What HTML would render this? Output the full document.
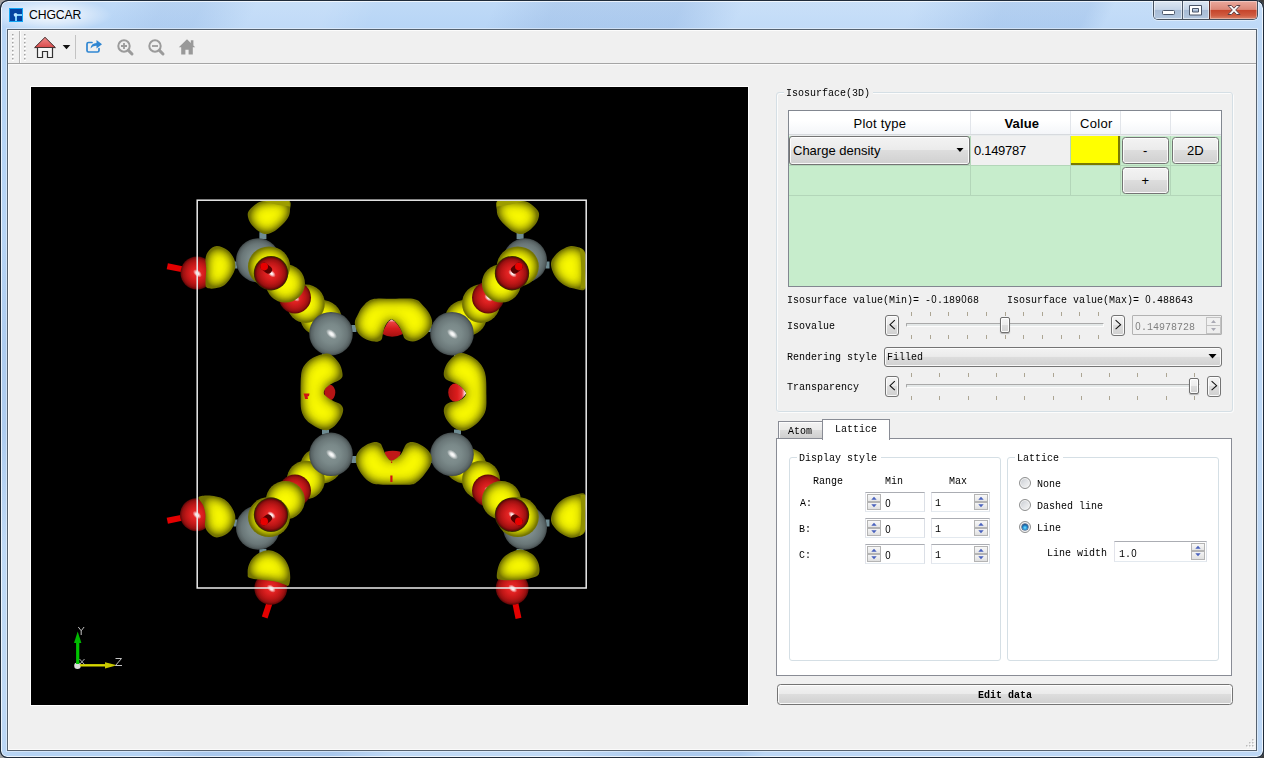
<!DOCTYPE html>
<html><head><meta charset="utf-8"><title>CHGCAR</title>
<style>
*{box-sizing:border-box;margin:0;padding:0}
html,body{width:1264px;height:758px;overflow:hidden;background:linear-gradient(90deg,#a0a0a0 0,#a0a0a0 50%,#3c3c3c 50%,#3c3c3c 100%);font-family:"Liberation Sans",sans-serif}
.abs,.abs>*{position:absolute}
#win{position:absolute;left:0;top:0;width:1264px;height:758px;border-radius:8px 8px 7px 7px;
 background:
  radial-gradient(ellipse 62px 17px at 50px 15px,rgba(255,255,255,.9),rgba(255,255,255,.45) 55%,rgba(255,255,255,0) 100%),
  linear-gradient(115deg,rgba(255,255,255,0) 0,rgba(255,255,255,0) 105px,rgba(20,60,140,.05) 150px,rgba(20,60,140,.05) 185px,rgba(255,255,255,.13) 235px,rgba(255,255,255,.13) 300px,rgba(255,255,255,0) 345px,rgba(255,255,255,0) 450px,rgba(20,60,140,.075) 505px,rgba(20,60,140,.075) 620px,rgba(255,255,255,.15) 676px,rgba(255,255,255,.15) 830px,rgba(20,60,140,.06) 912px,rgba(20,60,140,.06) 990px,rgba(255,255,255,.1) 1012px,rgba(255,255,255,.1) 100%),
  linear-gradient(#c0daf7 0,#b7d5f6 28px,#b5d3f4 100%);
 box-shadow:inset 0 0 0 1px #1f2b3a,inset 0 0 0 2px rgba(255,255,255,.72)}
#client{position:absolute;left:7px;top:29px;width:1250px;height:722px;border:1px solid #56626f;background:#f0f0f0;box-shadow:inset 1px 0 0 #fbfbfb,inset 0 -1px 0 #fbfbfb,0 0 0 1px rgba(255,255,255,.42)}
#title{position:absolute;left:29px;top:8px;font-size:12.2px;letter-spacing:-.1px;line-height:15px;color:#000;white-space:nowrap}
/* SimSun-like monospaced text: 6px advance, 8px cap height */
.ss{position:absolute;font:11.6px/14px "Liberation Mono",monospace;color:#000;white-space:nowrap;transform:scaleX(.862);transform-origin:0 0;letter-spacing:0}
.z{font-family:"Liberation Sans",sans-serif;display:inline-block;width:6.96px;text-align:center;font-size:11.2px;line-height:14px}
.sg{position:absolute;font:12.5px/15px "Liberation Sans",sans-serif;color:#000;white-space:nowrap}
.btn{position:absolute;border:1px solid #747474;border-radius:3.5px;background:linear-gradient(#f3f3f3 0,#ebebeb 47%,#dddddd 50%,#d0d0d0 100%);box-shadow:inset 0 0 0 1px rgba(255,255,255,.85)}
.gb{position:absolute;border:1px solid #d5dfe5;border-radius:3px}
.gbt{position:absolute;background:#f0f0f0;height:12px}
.tick{position:absolute;width:1px;height:4px;background:#aca593}
.groove{position:absolute;height:4px;border:1px solid #a9a9a9;border-bottom-color:#fcfcfc;border-right-color:#fcfcfc;background:#e4e8e8;border-radius:1px}
.handle{position:absolute;width:10px;height:16px;border:1px solid #6f6f6f;border-radius:2px;background:linear-gradient(#f5f5f5 0,#ededed 48%,#dcdcdc 52%,#d2d2d2 100%);box-shadow:inset 0 0 0 1px rgba(255,255,255,.9),0 1px 1px rgba(0,0,0,.25)}
.spin{position:absolute;background:#fff;border:1px solid #abadb3;border-color:#abadb3 #dbdfe6 #e3e9ef #e2e3ea}
.sb{position:absolute;width:15px;border:1px solid #b4b4b4;background:linear-gradient(#f6f6f6,#e2e2e2)}
.radio{position:absolute;width:12px;height:12px;border-radius:50%;border:1px solid #8e8f8f;background:linear-gradient(135deg,#c4c8ce 0,#dfe1e4 45%,#f7f7f7 100%);box-shadow:inset 0 0 0 1px #f4f4f4}
</style></head><body>
<div id="win">
<!-- title bar -->
<svg style="position:absolute;left:9px;top:8px" width="14" height="14" viewBox="0 0 14 14">
 <rect width="14" height="14" fill="#12a5f4"/><rect x="1" y="1" width="12" height="12" fill="#0443a2"/>
 <rect x="6" y="6" width="2" height="7" fill="#7fd0ff"/><rect x="7" y="6" width="6" height="2" fill="#7fd0ff"/>
 <circle cx="6.6" cy="6.8" r="1.9" fill="#bfe6ff"/>
</svg>
<div id="title">CHGCAR</div>
<!-- caption buttons -->
<div style="position:absolute;left:1153px;top:1px;width:105px;height:19px;border:1px solid #46515f;border-top:none;border-radius:0 0 5px 5px;overflow:hidden;box-shadow:0 0 0 1px rgba(255,255,255,.45)">
 <div style="position:absolute;left:0;top:0;width:28px;height:18px;background:linear-gradient(#dde7f3 0,#c6d5e8 47%,#a7bbd5 50%,#b3c7df 100%);box-shadow:inset 0 0 0 1px rgba(255,255,255,.55)"></div>
 <div style="position:absolute;left:28px;top:0;width:1px;height:18px;background:#4d596b"></div>
 <div style="position:absolute;left:29px;top:0;width:26px;height:18px;background:linear-gradient(#dde7f3 0,#c6d5e8 47%,#a7bbd5 50%,#b3c7df 100%);box-shadow:inset 0 0 0 1px rgba(255,255,255,.55)"></div>
 <div style="position:absolute;left:55px;top:0;width:1px;height:18px;background:#5a2a24"></div>
 <div style="position:absolute;left:56px;top:0;width:47px;height:18px;background:linear-gradient(#eaa99d 0,#dc8878 47%,#c5432a 50%,#cf5b40 80%,#d9846c 100%);box-shadow:inset 0 0 0 1px rgba(255,255,255,.35)"></div>
 <svg style="position:absolute;left:0;top:-1px" width="104" height="20" viewBox="0 0 104 20">
  <rect x="8.5" y="10.5" width="12" height="4" rx="1" fill="#fff" stroke="#4a5568" stroke-width="1"/>
  <path d="M35.5 5.5h12v9.500h-12z M38.500 8.500v3.500h6v-3.500z" fill="#fff" fill-rule="evenodd" stroke="#4a5568" stroke-width="1"/>
  <path d="M74 5.500h3.400l2.600 2.700 2.600-2.700h3.400l-4.300 4.500 4.300 4.500h-3.400l-2.600-2.700-2.600 2.700h-3.400l4.300-4.500z" fill="#fff" stroke="#5b4046" stroke-width="1" stroke-linejoin="round"/>
 </svg>
</div>
<div id="client"></div>
<!-- toolbar -->
<div style="position:absolute;left:8px;top:30px;width:1248px;height:1px;background:#fcfcfc"></div>
<div style="position:absolute;left:8px;top:63px;width:1248px;height:1px;background:#a5a5a5"></div>
<div style="position:absolute;left:8px;top:64px;width:1248px;height:1px;background:#fafafa"></div>
<div style="position:absolute;left:19px;top:31px;width:1px;height:32px;background:#b5b5b5"></div>
<div style="position:absolute;left:20px;top:31px;width:1px;height:32px;background:#fdfdfd"></div>
<svg style="position:absolute;left:8px;top:30px" width="200" height="34" viewBox="8 30 200 34">
 <g>
  <g fill="#fff"><rect x="12" y="35" width="2" height="2"/><rect x="12" y="39" width="2" height="2"/><rect x="12" y="43" width="2" height="2"/><rect x="12" y="47" width="2" height="2"/><rect x="12" y="51" width="2" height="2"/><rect x="12" y="55" width="2" height="2"/><rect x="12" y="59" width="2" height="2"/></g>
  <g fill="#a3a3a3"><rect x="12" y="34" width="1.500" height="1.500"/><rect x="12" y="38" width="1.500" height="1.500"/><rect x="12" y="42" width="1.500" height="1.500"/><rect x="12" y="46" width="1.500" height="1.500"/><rect x="12" y="50" width="1.500" height="1.500"/><rect x="12" y="54" width="1.500" height="1.500"/><rect x="12" y="58" width="1.500" height="1.500"/></g>
 </g>
 <g transform="translate(12 0)">
  <g fill="#fff"><rect x="12" y="35" width="2" height="2"/><rect x="12" y="39" width="2" height="2"/><rect x="12" y="43" width="2" height="2"/><rect x="12" y="47" width="2" height="2"/><rect x="12" y="51" width="2" height="2"/><rect x="12" y="55" width="2" height="2"/><rect x="12" y="59" width="2" height="2"/></g>
  <g fill="#a3a3a3"><rect x="12" y="34" width="1.500" height="1.500"/><rect x="12" y="38" width="1.500" height="1.500"/><rect x="12" y="42" width="1.500" height="1.500"/><rect x="12" y="46" width="1.500" height="1.500"/><rect x="12" y="50" width="1.500" height="1.500"/><rect x="12" y="54" width="1.500" height="1.500"/><rect x="12" y="58" width="1.500" height="1.500"/></g>
 </g>
 <!-- home icon -->
 <defs><linearGradient id="roof" x1="0" y1="0" x2="0" y2="1"><stop offset="0" stop-color="#ef8a8a"/><stop offset="1" stop-color="#d94a4a"/></linearGradient></defs>
 <path d="M45 37.300 L34.600 47.600 H55.400 Z" fill="url(#roof)" stroke="#3c2a2a" stroke-width="1" stroke-linejoin="round"/>
 <path d="M37.500 48 V57.500 H42.500 V51.500 H47.500 V57.500 H52.500 V48" fill="#f7f7f7" stroke="#333" stroke-width="1.200"/>
 <path d="M62.700 45 h7.600 l-3.800 4.200z" fill="#111"/>
 <rect x="75" y="35" width="1" height="24" fill="#c3c3c3"/>
 <!-- export -->
 <path d="M92 42.500 H88.500 Q87 42.500 87 44 V50.500 Q87 52 88.500 52 H97.500 Q99 52 99 50.500 V48.500" fill="none" stroke="#2f86d2" stroke-width="1.700" stroke-linecap="round"/>
 <path d="M90.500 48.500 Q91 43.200 96.500 43 V40 L102 44.300 L96.500 48.600 V45.800 Q92.500 45.600 90.500 48.500Z" fill="#2f86d2"/>
 <!-- zoom in -->
 <g stroke="#9b9b9b" fill="none"><circle cx="124" cy="46" r="5.700" stroke-width="2"/><path d="M128.400 50.400 L132 54" stroke-width="3" stroke-linecap="round"/><path d="M121 46h6M124 43v6" stroke-width="1.800"/></g>
 <!-- zoom out -->
 <g stroke="#9b9b9b" fill="none"><circle cx="155" cy="46" r="5.700" stroke-width="2"/><path d="M159.400 50.400 L163 54" stroke-width="3" stroke-linecap="round"/><path d="M152 46h6" stroke-width="1.800"/></g>
 <!-- grey home -->
 <path d="M187 39.200 L178.800 47.200 H181.200 V54.500 H185.400 V49.800 H188.600 V54.500 H192.800 V47.200 H195.200 L193.400 45.400 V40.300 H190.800 V42.900 Z" fill="#999"/>
</svg>
<div style="position:absolute;left:30px;top:86px;width:719px;height:620px;border:1px solid #fff"></div>
<svg style="position:absolute;left:31px;top:87px" width="717" height="618" viewBox="31 87 717 618">
<defs>
<filter id="fy" x="-20%" y="-20%" width="140%" height="140%" color-interpolation-filters="sRGB">
<feGaussianBlur in="SourceAlpha" stdDeviation="7" result="b"/>
<feComponentTransfer in="b" result="m"><feFuncA type="table" tableValues="0 0 0 0 0 0.04 0.27 0.48 0.68 0.86 1"/></feComponentTransfer>
<feFlood flood-color="#fbfb00"/><feComposite in2="m" operator="in"/><feComposite in2="SourceAlpha" operator="in" result="br"/>
<feFlood flood-color="#727200"/><feComposite in2="SourceAlpha" operator="in" result="dk"/>
<feMerge><feMergeNode in="dk"/><feMergeNode in="br"/></feMerge>
</filter>
<radialGradient id="gY" cx=".5" cy=".5" r=".5"><stop offset="0" stop-color="#ffff00"/><stop offset=".3" stop-color="#f9f900"/><stop offset=".5" stop-color="#efef00"/><stop offset=".7" stop-color="#dcdc00"/><stop offset=".82" stop-color="#c6c600"/><stop offset=".91" stop-color="#abab00"/><stop offset=".97" stop-color="#8e8e00"/><stop offset="1" stop-color="#6a6a00"/></radialGradient>
<radialGradient id="gY2" cx=".5" cy=".5" r=".56"><stop offset="0" stop-color="#ffff00"/><stop offset=".3" stop-color="#f9f900"/><stop offset=".5" stop-color="#efef00"/><stop offset=".7" stop-color="#dcdc00"/><stop offset=".82" stop-color="#c6c600"/><stop offset=".91" stop-color="#abab00"/><stop offset=".97" stop-color="#8e8e00"/><stop offset="1" stop-color="#747400"/></radialGradient>
<radialGradient id="gG" cx=".5" cy=".5" r=".5"><stop offset="0" stop-color="#869494"/><stop offset=".45" stop-color="#7a8989"/><stop offset=".75" stop-color="#6a7778"/><stop offset=".9" stop-color="#596465"/><stop offset="1" stop-color="#3f4748"/></radialGradient>
<radialGradient id="gR" cx=".5" cy=".5" r=".5"><stop offset="0" stop-color="#ec2c2c"/><stop offset=".35" stop-color="#dc2020"/><stop offset=".65" stop-color="#bc1616"/><stop offset=".85" stop-color="#981010"/><stop offset="1" stop-color="#5a0606"/></radialGradient>
<radialGradient id="gH" cx=".5" cy=".5" r=".5"><stop offset="0" stop-color="#fff" stop-opacity="1"/><stop offset=".35" stop-color="#fff" stop-opacity=".85"/><stop offset="1" stop-color="#fff" stop-opacity="0"/></radialGradient>
<linearGradient id="gRt" x1="0" y1="319" x2="0" y2="338" gradientUnits="userSpaceOnUse"><stop offset="0" stop-color="#ffffff"/><stop offset=".18" stop-color="#ea4040"/><stop offset=".5" stop-color="#d41c1c"/><stop offset="1" stop-color="#9c0e0e"/></linearGradient>
<linearGradient id="gRr" x1="466.500" y1="0" x2="448" y2="0" gradientUnits="userSpaceOnUse"><stop offset="0" stop-color="#ffffff"/><stop offset=".1" stop-color="#ffd0d0"/><stop offset=".25" stop-color="#ec3c3c"/><stop offset=".5" stop-color="#dc1c1c"/><stop offset="1" stop-color="#b01212"/></linearGradient>
<radialGradient id="gYt" cx="393" cy="338" r="46" gradientUnits="userSpaceOnUse" gradientTransform="translate(393 338) scale(1 .95) translate(-393 -338)"><stop offset="0" stop-color="#e8e800"/><stop offset=".35" stop-color="#ffff00"/><stop offset=".62" stop-color="#f2f200"/><stop offset=".85" stop-color="#c6c600"/><stop offset="1" stop-color="#8c8c00"/></radialGradient>
<radialGradient id="gYb" cx="393" cy="444" r="46" gradientUnits="userSpaceOnUse" gradientTransform="translate(393 444) scale(1 .95) translate(-393 -444)"><stop offset="0" stop-color="#e8e800"/><stop offset=".35" stop-color="#ffff00"/><stop offset=".62" stop-color="#f2f200"/><stop offset=".85" stop-color="#c6c600"/><stop offset="1" stop-color="#8c8c00"/></radialGradient>
<radialGradient id="gYl" cx="342" cy="392" r="46" gradientUnits="userSpaceOnUse" gradientTransform="translate(342 392) scale(.95 1) translate(-342 -392)"><stop offset="0" stop-color="#e8e800"/><stop offset=".35" stop-color="#ffff00"/><stop offset=".62" stop-color="#f2f200"/><stop offset=".85" stop-color="#c6c600"/><stop offset="1" stop-color="#8c8c00"/></radialGradient>
<radialGradient id="gYr" cx="445" cy="392" r="46" gradientUnits="userSpaceOnUse" gradientTransform="translate(445 392) scale(.95 1) translate(-445 -392)"><stop offset="0" stop-color="#e8e800"/><stop offset=".35" stop-color="#ffff00"/><stop offset=".62" stop-color="#f2f200"/><stop offset=".85" stop-color="#c6c600"/><stop offset="1" stop-color="#8c8c00"/></radialGradient>
</defs>
<rect x="31" y="87" width="717" height="618" fill="#000"/>
<rect x="259.4" y="232.2" width="7" height="7" fill="#6f8c93"/>
<rect x="233.5" y="261.5" width="4" height="7" fill="#6f8c93"/>
<rect x="351.4" y="325" width="5" height="7" fill="#6f8c93"/>
<rect x="322" y="353.5" width="7" height="5" fill="#6f8c93"/>
<circle cx="258" cy="260.3" r="22" fill="url(#gG)"/>
<ellipse cx="321" cy="318" rx="20.5" ry="18" fill="#ff0" filter="url(#fy)"/>
<ellipse cx="305.8" cy="303.7" rx="19" ry="19.2" fill="#ff0" filter="url(#fy)"/>
<circle cx="331" cy="333.7" r="21.8" fill="url(#gG)"/>
<ellipse cx="331.5" cy="334" rx="6.5" ry="3.6" fill="url(#gH)" transform="rotate(40 331.5 334)"/>
<circle cx="295" cy="297.5" r="16" fill="url(#gR)"/>
<ellipse cx="295.5" cy="297.8" rx="5" ry="3" fill="url(#gH)" transform="rotate(40 295.5 297.8)"/>
<ellipse cx="285.4" cy="283.4" rx="19.5" ry="19.2" fill="#ff0" filter="url(#fy)"/>
<ellipse cx="269" cy="266.5" rx="21" ry="20" fill="#ff0" filter="url(#fy)"/>
<circle cx="271" cy="273.2" r="17.2" fill="#3a2a00"/>
<circle cx="271" cy="273.2" r="16.3" fill="url(#gR)"/>
<ellipse cx="271.5" cy="273.5" rx="5" ry="3" fill="url(#gH)" transform="rotate(40 271.5 273.5)"/>
<path d="M264.2 266.6L268.2 269.8" stroke="#5a0000" stroke-width="7.600" stroke-linecap="round"/>
<circle cx="264.2" cy="266.6" r="3.8" fill="#e80000"/>
<rect x="259.4" y="548.8" width="7" height="7" fill="#6f8c93"/>
<rect x="233.5" y="519.5" width="4" height="7" fill="#6f8c93"/>
<rect x="351.4" y="456" width="5" height="7" fill="#6f8c93"/>
<rect x="322" y="429.5" width="7" height="5" fill="#6f8c93"/>
<circle cx="258" cy="527.7" r="22" fill="url(#gG)"/>
<ellipse cx="321" cy="465.6" rx="20.5" ry="18" fill="#ff0" filter="url(#fy)"/>
<ellipse cx="305.8" cy="479.9" rx="19" ry="19.2" fill="#ff0" filter="url(#fy)"/>
<circle cx="331" cy="454.3" r="21.8" fill="url(#gG)"/>
<ellipse cx="331.5" cy="454.6" rx="6.5" ry="3.6" fill="url(#gH)" transform="rotate(40 331.5 454.6)"/>
<circle cx="295" cy="490.5" r="16" fill="url(#gR)"/>
<ellipse cx="295.5" cy="490.8" rx="5" ry="3" fill="url(#gH)" transform="rotate(40 295.5 490.8)"/>
<ellipse cx="285.4" cy="500.2" rx="19.5" ry="19.2" fill="#ff0" filter="url(#fy)"/>
<ellipse cx="269" cy="517.1" rx="21" ry="20" fill="#ff0" filter="url(#fy)"/>
<circle cx="271" cy="514.8" r="17.2" fill="#3a2a00"/>
<circle cx="271" cy="514.8" r="16.3" fill="url(#gR)"/>
<ellipse cx="271.5" cy="515.1" rx="5" ry="3" fill="url(#gH)" transform="rotate(40 271.5 515.1)"/>
<path d="M264.2 521.4L268.2 518.2" stroke="#5a0000" stroke-width="7.600" stroke-linecap="round"/>
<circle cx="264.2" cy="521.4" r="3.8" fill="#e80000"/>
<rect x="516.6" y="232.2" width="7" height="7" fill="#6f8c93"/>
<rect x="545.5" y="261.5" width="4" height="7" fill="#6f8c93"/>
<rect x="426.6" y="325" width="5" height="7" fill="#6f8c93"/>
<rect x="454" y="353.5" width="7" height="5" fill="#6f8c93"/>
<circle cx="525" cy="260.3" r="22" fill="url(#gG)"/>
<ellipse cx="465.8" cy="318" rx="20.5" ry="18" fill="#ff0" filter="url(#fy)"/>
<ellipse cx="481" cy="303.7" rx="19" ry="19.2" fill="#ff0" filter="url(#fy)"/>
<circle cx="452" cy="333.7" r="21.8" fill="url(#gG)"/>
<ellipse cx="452.5" cy="334" rx="6.5" ry="3.6" fill="url(#gH)" transform="rotate(40 452.5 334)"/>
<circle cx="488" cy="297.5" r="16" fill="url(#gR)"/>
<ellipse cx="488.5" cy="297.8" rx="5" ry="3" fill="url(#gH)" transform="rotate(40 488.5 297.8)"/>
<ellipse cx="501.4" cy="283.4" rx="19.5" ry="19.2" fill="#ff0" filter="url(#fy)"/>
<ellipse cx="517.8" cy="266.5" rx="21" ry="20" fill="#ff0" filter="url(#fy)"/>
<circle cx="512" cy="273.2" r="17.2" fill="#3a2a00"/>
<circle cx="512" cy="273.2" r="16.3" fill="url(#gR)"/>
<ellipse cx="512.5" cy="273.5" rx="5" ry="3" fill="url(#gH)" transform="rotate(40 512.5 273.5)"/>
<path d="M518.8 266.6L514.8 269.8" stroke="#5a0000" stroke-width="7.600" stroke-linecap="round"/>
<circle cx="518.8" cy="266.6" r="3.8" fill="#e80000"/>
<rect x="516.6" y="548.8" width="7" height="7" fill="#6f8c93"/>
<rect x="545.5" y="519.5" width="4" height="7" fill="#6f8c93"/>
<rect x="426.6" y="456" width="5" height="7" fill="#6f8c93"/>
<rect x="454" y="429.5" width="7" height="5" fill="#6f8c93"/>
<circle cx="525" cy="527.7" r="22" fill="url(#gG)"/>
<ellipse cx="465.8" cy="465.6" rx="20.5" ry="18" fill="#ff0" filter="url(#fy)"/>
<ellipse cx="481" cy="479.9" rx="19" ry="19.2" fill="#ff0" filter="url(#fy)"/>
<circle cx="452" cy="454.3" r="21.8" fill="url(#gG)"/>
<ellipse cx="452.5" cy="454.6" rx="6.5" ry="3.6" fill="url(#gH)" transform="rotate(40 452.5 454.6)"/>
<circle cx="488" cy="490.5" r="16" fill="url(#gR)"/>
<ellipse cx="488.5" cy="490.8" rx="5" ry="3" fill="url(#gH)" transform="rotate(40 488.5 490.8)"/>
<ellipse cx="501.4" cy="500.2" rx="19.5" ry="19.2" fill="#ff0" filter="url(#fy)"/>
<ellipse cx="517.8" cy="517.1" rx="21" ry="20" fill="#ff0" filter="url(#fy)"/>
<circle cx="512" cy="514.8" r="17.2" fill="#3a2a00"/>
<circle cx="512" cy="514.8" r="16.3" fill="url(#gR)"/>
<ellipse cx="512.5" cy="515.1" rx="5" ry="3" fill="url(#gH)" transform="rotate(40 512.5 515.1)"/>
<path d="M518.8 521.4L514.8 518.2" stroke="#5a0000" stroke-width="7.600" stroke-linecap="round"/>
<circle cx="518.8" cy="521.4" r="3.8" fill="#e80000"/>
<path d="M261.6 201.2C258.3 201.9 257 203.4 255 204.8C253 206.2 250.9 208.2 249.7 209.8C248.5 211.4 247.7 212.4 247.7 214.4C247.7 216.4 248.5 219.4 249.7 221.7C250.9 224 253 226.4 255 228.3C257 230.2 259.6 232 261.6 232.9C263.6 233.8 264.7 234.2 266.9 233.9C269.1 233.6 272.2 232.5 274.8 230.9C277.4 229.3 280.4 226.7 282.7 224.3C285 221.9 287.4 218.8 288.6 216.4C289.8 214 289.9 212.3 290 209.8C290.1 207.3 292 202.7 289.5 201.2C287 199.7 279.6 200.8 275 200.8C270.4 200.8 264.9 200.5 261.6 201.2Z" fill="#ff0" filter="url(#fy)"/>
<path d="M263 201 L289.500 201 L290 206.500 Q278 205.500 263 201Z" fill="#9c9c00"/>
<path d="M525.2 201.2C528.5 201.9 529.8 203.4 531.8 204.8C533.8 206.2 535.9 208.2 537.1 209.8C538.3 211.4 539.1 212.4 539.1 214.4C539.1 216.4 538.3 219.4 537.1 221.7C535.9 224 533.8 226.4 531.8 228.3C529.8 230.2 527.2 232 525.2 232.9C523.2 233.8 522.1 234.2 519.9 233.9C517.7 233.6 514.6 232.5 512 230.9C509.4 229.3 506.4 226.7 504.1 224.3C501.8 221.9 499.4 218.8 498.2 216.4C497 214 496.9 212.3 496.8 209.8C496.6 207.3 494.8 202.7 497.3 201.2C499.8 199.7 507.1 200.8 511.8 200.8C516.4 200.8 521.9 200.5 525.2 201.2Z" fill="#ff0" filter="url(#fy)"/>
<path d="M523.8 201 L497.3 201 L496.8 206.500 Q508.8 205.500 523.8 201Z" fill="#9c9c00"/>
<path d="M269.500 603 L264.700 617.500" stroke="#e40000" stroke-width="6"/>
<circle cx="270.8" cy="588.3" r="16.5" fill="url(#gR)"/>
<ellipse cx="271.3" cy="588.6" rx="5.2" ry="3.2" fill="url(#gH)" transform="rotate(40 271.3 588.6)"/>
<path d="M515.300 603 L518.500 618.300" stroke="#e40000" stroke-width="6"/>
<circle cx="512.2" cy="588.3" r="16.5" fill="url(#gR)"/>
<ellipse cx="512.7" cy="588.6" rx="5.2" ry="3.2" fill="url(#gH)" transform="rotate(40 512.7 588.6)"/>
<path d="M268.5 550.2C265.4 550.2 261.8 551.5 259 553C256.2 554.5 253.8 556.7 252 559C250.2 561.3 248.9 564.5 248.2 567C247.5 569.5 247.6 572.2 247.7 574C247.8 575.8 247.2 576.6 248.6 577.5C250 578.4 253.1 578.8 256 579.3C258.9 579.8 262.7 579.8 266 580.2C269.3 580.6 273 581.1 276 581.8C279 582.5 281.9 583.7 284 584.3C286.1 584.9 287.5 586.6 288.5 585.6C289.5 584.6 290.1 580.9 290.2 578C290.3 575.1 289.9 571.2 289 568C288.1 564.8 286.4 561.5 284.5 559C282.6 556.5 280.2 554.5 277.5 553C274.8 551.5 271.6 550.2 268.5 550.2Z" fill="#ff0" filter="url(#fy)"/>
<path d="M522 549.7C518.8 549.3 515.8 550.5 513 551.5C510.2 552.5 507.2 554.2 505 556C502.8 557.8 501.3 560 500 562.5C498.7 565 497.8 568.3 497.3 571C496.8 573.7 496.4 577 497.2 578.5C498 580 499.5 579.7 502 580C504.5 580.3 508.3 580.3 512 580.2C515.7 580.1 520.5 580.1 524 579.6C527.5 579.1 530.6 578.3 533 577.5C535.4 576.7 537.2 576.4 538.3 575C539.4 573.6 539.6 571.3 539.5 569C539.4 566.7 538.8 563.5 537.5 561C536.2 558.5 534.6 555.9 532 554C529.4 552.1 525.2 550.1 522 549.7Z" fill="#ff0" filter="url(#fy)"/>
<path d="M167.300 266.200 L183 269.400" stroke="#e40000" stroke-width="6"/>
<circle cx="197" cy="273" r="16.5" fill="url(#gR)"/>
<ellipse cx="197.5" cy="273.3" rx="5.2" ry="3.2" fill="url(#gH)" transform="rotate(40 197.5 273.3)"/>
<path d="M167.300 520.800 L182.500 517.600" stroke="#e40000" stroke-width="6"/>
<circle cx="196.5" cy="514.7" r="16.5" fill="url(#gR)"/>
<ellipse cx="197" cy="515" rx="5.2" ry="3.2" fill="url(#gH)" transform="rotate(40 197 515)"/>
<path d="M216.7 246.1C213.6 246.2 210.7 248.6 208.8 250.7C206.9 252.8 205.9 255.5 205.5 258.6C205.1 261.7 206.2 265.2 206.2 269.2C206.2 273.1 205.4 279.2 205.5 282.3C205.6 285.4 205.3 286.8 207 287.8C208.7 288.8 212.5 288.8 215.4 288.3C218.3 287.8 222 286.9 224.6 285C227.2 283.1 229.4 280 231.2 277.1C233 274.2 234.8 270.9 235.2 267.8C235.6 264.7 235.2 261.6 233.9 258.6C232.6 255.6 230.2 252.1 227.3 250C224.4 247.9 219.8 246 216.7 246.1Z" fill="#ff0" filter="url(#fy)"/>
<path d="M216.7 537.5C213.6 537.4 210.8 534.9 208.8 533C206.9 531.1 205.6 529 205 526C204.4 523 205.8 518.5 205.5 515C205.2 511.5 204.2 507.9 203 505C201.8 502.1 198 499.1 198.5 497.5C199 495.9 203.1 495.8 206 495.6C208.9 495.4 212.9 495.9 216 496.5C219.1 497.1 222.1 497.8 224.6 499.5C227.1 501.2 229.4 503.8 231.2 506.5C233 509.2 234.8 512.7 235.2 515.8C235.6 518.9 235.2 522 233.9 525C232.6 528 230.2 531.5 227.3 533.6C224.4 535.7 219.8 537.6 216.7 537.5Z" fill="#ff0" filter="url(#fy)"/>
<path d="M571 245.9C567.9 246.2 564.7 247.9 562 249.5C559.3 251.1 556.8 253.3 555 255.5C553.2 257.7 551.5 259.9 551.1 262.5C550.7 265.1 551.4 268.2 552.5 271C553.6 273.8 555.4 277.1 557.5 279.5C559.6 281.9 562.2 284 565 285.5C567.8 287 570.6 288 574 288.5C577.4 289 583.3 292.1 585.2 288.7C587.1 285.3 585.4 273.9 585.4 268C585.4 262.1 586 256.3 585.2 253C584.4 249.7 582.9 249.2 580.5 248C578.1 246.8 574.1 245.7 571 245.9Z" fill="#ff0" filter="url(#fy)"/>
<path d="M579.500 247.500 Q584 250 585.300 254 L585.300 288.500 L580.500 288.500 Q582.500 268 579.500 247.500Z" fill="#909000"/>
<path d="M571 537.7C567.9 537.5 564.7 535.7 562 534.1C559.3 532.5 556.8 530.3 555 528.1C553.2 525.9 551.5 523.7 551.1 521.1C550.7 518.5 551.4 515.4 552.5 512.6C553.6 509.8 555.4 506.5 557.5 504.1C559.6 501.7 562.2 499.6 565 498.1C567.8 496.6 570.6 495.6 574 495.1C577.4 494.6 583.3 491.5 585.2 494.9C587.1 498.3 585.4 509.7 585.4 515.6C585.4 521.6 586 527.3 585.2 530.6C584.4 533.9 582.9 534.4 580.5 535.6C578.1 536.8 574.1 538 571 537.7Z" fill="#ff0" filter="url(#fy)"/>
<path d="M579.500 536.1 Q584 533.6 585.300 529.6 L585.300 495.1 L580.500 495.1 Q582.500 515.6 579.500 536.1Z" fill="#909000"/>
<path d="M391.500 319.300 Q386 322 382.500 334 Q391.500 339.500 403 334 Q397.500 322 391.500 319.300Z" fill="url(#gRt)"/>
<path d="M372.6 299.2C377.7 297.9 386 298.8 393 298.8C400 298.8 409.7 298.2 414.6 299.2C419.5 300.2 419.9 302.3 422.3 304.7C424.7 307.1 427.6 310.3 429.2 313.3C430.8 316.3 432.3 319.6 432.2 322.7C432.1 325.8 430.1 329.6 428.3 332.2C426.5 334.8 424.1 336.6 421.5 338.2C418.9 339.8 415.6 341.5 412.9 341.6C410.2 341.7 406.9 340.3 405.2 339C403.5 337.7 403.8 336.2 402.6 333.9C401.5 331.6 400.2 327.7 398.3 325.3C396.4 322.9 393.6 319.3 391.5 319.3C389.4 319.3 386.9 322.9 385.5 325.3C384.1 327.7 383.6 331.5 382.9 333.9C382.2 336.3 382.6 338.6 381.2 339.9C379.8 341.2 377.2 341.9 374.3 341.6C371.4 341.3 366.8 339.8 364 338.2C361.2 336.6 359.1 334.8 357.6 332.2C356.1 329.6 354.8 325.6 354.8 322.7C354.8 319.8 356.3 317.7 357.6 315C358.9 312.3 360.2 309 362.7 306.4C365.2 303.8 367.6 300.5 372.6 299.2Z" fill="#ff0" filter="url(#fy)"/>
<path d="M385 451.800 Q392.500 449.500 400.800 451.800 L399 458 L391.500 461.500 L384.500 456Z" fill="#c01818"/>
<path d="M374.3 442.1C371.9 442.4 368.3 443.8 365.7 445.3C363.1 446.8 360.5 448.8 358.9 450.9C357.3 453 356.2 455.1 355.9 457.7C355.6 460.3 356.1 463.4 357.2 466.3C358.3 469.2 360.4 472.5 362.3 474.9C364.2 477.3 366 479.3 368.3 480.9C370.6 482.5 371.9 483.7 376 484.3C380.1 484.9 387.1 484.7 393 484.7C398.9 484.7 407.2 485 411.2 484.5C415.2 484 415.1 483.3 417.2 481.7C419.3 480.1 421.9 477.5 424 474.9C426.1 472.3 428.7 469 430 466.3C431.3 463.6 431.9 461 431.8 458.6C431.7 456.2 430.8 453.9 429.2 451.7C427.6 449.5 425 447.3 422.3 445.7C419.6 444.1 415.5 442.5 412.9 442.1C410.3 441.8 408.4 442.6 406.9 443.6C405.4 444.6 405 446.4 403.9 448.3C402.8 450.2 402.1 453.1 400 455.2C397.9 457.3 393.8 460.6 391.5 460.7C389.2 460.8 387.7 458.1 386.3 456C384.9 453.9 383.9 450.4 382.9 448.3C381.9 446.2 381.7 444.6 380.3 443.6C378.9 442.6 376.7 441.8 374.3 442.1Z" fill="#ff0" filter="url(#fy)"/>
<rect x="390.300" y="475.500" width="2.200" height="6.500" fill="#d01414"/><rect x="391" y="461.500" width="1.200" height="1.500" fill="#d01414"/>
<ellipse cx="329.8" cy="392.5" rx="5.5" ry="7.8" fill="#b61515"/>
<path d="M326.3 353.5C322.8 353.7 316.2 356 312.5 358.1C308.8 360.2 305.7 363.3 303.8 366.3C301.9 369.3 301.5 371.5 301 376.3C300.5 381.1 300.6 389.5 300.6 395.1C300.7 400.7 300.4 405.9 301.3 410.1C302.2 414.3 304 417.4 306.3 420.1C308.6 422.8 311.9 424.7 315 426.4C318.1 428.1 322.2 429.9 325.1 430.1C328 430.3 330.1 429.5 332.6 427.6C335.1 425.7 338.3 421.8 340.1 418.9C341.9 416 343.1 412.5 343.2 410.1C343.3 407.7 342.3 406 340.7 404.5C339.1 403 336 402.4 333.8 401.3C331.6 400.2 329.3 399 327.6 397.6C325.9 396.2 324 394.9 323.8 393.2C323.6 391.5 324.8 389.3 326.3 387.6C327.8 385.9 330.3 384.6 332.6 383.2C334.9 381.8 338.4 380.8 340.1 379.4C341.8 378 342.6 377.5 342.6 375.1C342.6 372.7 341.6 368 340.1 365C338.6 362 336.1 358.8 333.8 356.9C331.5 355 329.9 353.3 326.3 353.5Z" fill="#ff0" filter="url(#fy)"/>
<path d="M303.500 393.500h6l-.5 2.500 -1.500 .5 .5 2.500h-3l-.5-2.500z" fill="#d01414"/>
<path d="M448.200 392.500 Q448.500 384 456 383.300 Q462 386 466.300 393.200 Q462 400 456 402 Q448.500 401.500 448.200 392.500Z" fill="url(#gRr)"/>
<path d="M461.3 353.1C464.4 353.2 469.3 354.9 472.6 356.9C475.9 358.9 479.1 361.8 481.3 365C483.5 368.2 484.9 371.3 485.7 376.3C486.5 381.3 486.4 389.5 486.4 395.1C486.4 400.7 486.8 405.9 485.7 410.1C484.6 414.3 482.5 417.2 480.1 420.1C477.7 423 474.2 425.8 471.3 427.6C468.4 429.4 465.5 430.8 462.6 430.8C459.7 430.8 456.4 429.4 453.8 427.6C451.2 425.8 448.6 422.8 446.9 420.1C445.2 417.4 444 413.9 443.8 411.4C443.6 408.9 444.4 406.7 445.7 405.1C446.9 403.5 449.1 402.7 451.3 402C453.5 401.3 456.7 401.4 458.8 400.7C460.9 400 462.6 398.9 463.8 397.6C465 396.4 466.3 394.8 466.1 393.2C465.9 391.6 464.2 389.8 462.6 388.2C461 386.6 458.4 384.9 456.3 383.8C454.2 382.7 451.9 382.2 450 381.3C448.1 380.4 446 379.7 445 378.2C444 376.7 443.5 374.9 443.8 372.5C444.1 370.1 445.2 366.5 446.9 363.8C448.6 361.1 451.4 358.1 453.8 356.3C456.2 354.5 458.2 353 461.3 353.1Z" fill="#ff0" filter="url(#fy)"/>
<rect x="197.2" y="200.200" width="389" height="387.800" fill="none" stroke="#ececec" stroke-width="1.500"/>
<g>
<circle cx="77.500" cy="665.800" r="3.300" fill="#dcdcdc"/>
<path d="M80 665.300 H106" stroke="#d8d800" stroke-width="2.400"/>
<path d="M105 662.200 L117 665.300 L105 668.400Z" fill="#c8c800"/>
<path d="M77.700 664 V642" stroke="#00c400" stroke-width="3.200"/>
<path d="M74 643 L77.700 631.500 L81.400 643Z" fill="#00b800"/>
<path d="M78.300 627 L81.200 630.800 L84.100 627 M81.200 630.800 V635" stroke="#c4c4c4" stroke-width="1" fill="none"/>
<path d="M115.500 658.500 H121.500 L115.500 665.500 H122" stroke="#c4c4c4" stroke-width="1" fill="none"/>
<path d="M79.500 659 L84.500 664.500 M84.500 659 L79.500 664.500" stroke="#b0b0b0" stroke-width="1" fill="none"/>
</g>
</svg>
<div class="gb" style="left:777px;top:93px;width:457px;height:320px;border-color:#fcfcfc"></div>
<div class="gb" style="left:776px;top:92px;width:457px;height:320px"></div>
<div style="position:absolute;left:784px;top:88px;width:89px;height:10px;background:#f0f0f0"></div>
<div class="ss" style="left:785.5px;top:85.8px;color:#000;">Isosurface(3D)</div>
<div style="position:absolute;left:788px;top:110px;width:434px;height:177px;border:1px solid #828790;background:#c7edcc"></div>
<div style="position:absolute;left:789px;top:111px;width:432px;height:24px;background:linear-gradient(#ffffff 0,#ffffff 40%,#f3f5f8 100%)"></div>
<div style="position:absolute;left:789px;top:134px;width:432px;height:1px;background:#d7dade"></div>
<div style="position:absolute;left:789px;top:135px;width:432px;height:1px;background:#e9eced"></div>
<div style="position:absolute;left:970px;top:111px;width:1px;height:23px;background:#e2e5ea"></div>
<div style="position:absolute;left:970px;top:136px;width:1px;height:59px;background:#b3d6b9"></div>
<div style="position:absolute;left:1070px;top:111px;width:1px;height:23px;background:#e2e5ea"></div>
<div style="position:absolute;left:1070px;top:136px;width:1px;height:59px;background:#b3d6b9"></div>
<div style="position:absolute;left:1120px;top:111px;width:1px;height:23px;background:#e2e5ea"></div>
<div style="position:absolute;left:1120px;top:136px;width:1px;height:59px;background:#b3d6b9"></div>
<div style="position:absolute;left:1170px;top:111px;width:1px;height:23px;background:#e2e5ea"></div>
<div style="position:absolute;left:1170px;top:136px;width:1px;height:59px;background:#b3d6b9"></div>
<div style="position:absolute;left:789px;top:165px;width:432px;height:1px;background:#b3d6b9"></div>
<div style="position:absolute;left:789px;top:195px;width:432px;height:1px;background:#b3d6b9"></div>
<div class="sg" style="left:853.5px;top:116.0px;font-size:13px;letter-spacing:.25px">Plot type</div>
<div class="sg" style="left:1004.5px;top:116.0px;font-weight:bold;font-size:13px;letter-spacing:.15px">Value</div>
<div class="sg" style="left:1080px;top:116.0px;font-size:13px;letter-spacing:.3px">Color</div>
<div class="btn" style="left:789px;top:136px;width:181px;height:29px;border-radius:3px"></div>
<div class="sg" style="left:793px;top:143.0px;font-size:13px">Charge density</div>
<svg style="position:absolute;left:955px;top:147px" width="10" height="6"><path d="M1.500 1 h7 l-3.500 4z" fill="#000"/></svg>
<div style="position:absolute;left:971px;top:136px;width:99px;height:29px;background:#f0f0f0"></div>
<div class="sg" style="left:974px;top:143.0px;font-size:13px;letter-spacing:-.3px">0.149787</div>
<div style="position:absolute;left:1071px;top:136px;width:49px;height:29px;background:#ffff00;border-right:2px solid #7a7a00;border-bottom:2px solid #7a7a00"></div>
<div class="btn" style="left:1122px;top:137px;width:47px;height:27px"></div>
<div class="sg" style="left:1143px;top:143.0px;font-size:13px">-</div>
<div class="btn" style="left:1172px;top:137px;width:47px;height:27px"></div>
<div class="sg" style="left:1187px;top:143.0px;font-size:13px">2D</div>
<div class="btn" style="left:1122px;top:167px;width:47px;height:27px"></div>
<div class="sg" style="left:1141.5px;top:173.0px;font-size:13px">+</div>
<div class="ss" style="left:787px;top:292.2px;color:#000;">Isosurface value(Min)= -<span class="z">0</span>.189<span class="z">0</span>68</div>
<div class="ss" style="left:1007px;top:292.2px;color:#000;">Isosurface value(Max)= <span class="z">0</span>.488643</div>
<div class="ss" style="left:787px;top:318.8px;color:#000;">Isovalue</div>
<div class="btn" style="left:885px;top:315px;width:14px;height:21px;border-radius:3px"></div><svg style="position:absolute;left:885px;top:315px" width="14" height="21"><path d="M9.800 5.200 L5 9.700 L9.800 14.200" fill="none" stroke="#111" stroke-width="1.100"/></svg>
<div class="tick" style="left:911px;top:312px"></div><div class="tick" style="left:911px;top:335px"></div>
<div class="tick" style="left:930px;top:312px"></div><div class="tick" style="left:930px;top:335px"></div>
<div class="tick" style="left:948px;top:312px"></div><div class="tick" style="left:948px;top:335px"></div>
<div class="tick" style="left:967px;top:312px"></div><div class="tick" style="left:967px;top:335px"></div>
<div class="tick" style="left:986px;top:312px"></div><div class="tick" style="left:986px;top:335px"></div>
<div class="tick" style="left:1005px;top:312px"></div><div class="tick" style="left:1005px;top:335px"></div>
<div class="tick" style="left:1023px;top:312px"></div><div class="tick" style="left:1023px;top:335px"></div>
<div class="tick" style="left:1042px;top:312px"></div><div class="tick" style="left:1042px;top:335px"></div>
<div class="tick" style="left:1061px;top:312px"></div><div class="tick" style="left:1061px;top:335px"></div>
<div class="tick" style="left:1079px;top:312px"></div><div class="tick" style="left:1079px;top:335px"></div>
<div class="tick" style="left:1098px;top:312px"></div><div class="tick" style="left:1098px;top:335px"></div>
<div class="groove" style="left:906px;top:323px;width:198px"></div>
<div class="handle" style="left:1000px;top:317px"></div>
<div class="btn" style="left:1111px;top:315px;width:14px;height:21px;border-radius:3px"></div><svg style="position:absolute;left:1111px;top:315px" width="14" height="21"><path d="M4.600 5.200 L9.600 9.700 L4.600 14.200" fill="none" stroke="#111" stroke-width="1.100"/></svg>
<div style="position:absolute;left:1132px;top:315px;width:90px;height:20px;background:#f0f0f0;border:1px solid #b2b2b2;border-radius:1px"></div>
<div class="ss" style="left:1134.5px;top:318.8px;color:#808080;"><span class="z">0</span>.14978728</div>
<div style="position:absolute;left:1206px;top:317px;width:15px;height:9px;border:1px solid #c2c2c2;background:#f0f0f0"></div>
<div style="position:absolute;left:1206px;top:325px;width:15px;height:9px;border:1px solid #c2c2c2;background:#eeeeee"></div>
<svg style="position:absolute;left:1206px;top:317px" width="15" height="16"><path d="M5 6h5l-2.500-3z M5 11h5l-2.500 3z" fill="#a9a9b4"/></svg>
<div class="ss" style="left:787px;top:349.8px;color:#000;">Rendering style</div>
<div class="btn" style="left:884px;top:347px;width:338px;height:20px;border-radius:3px"></div>
<div class="ss" style="left:887px;top:349.8px;color:#000;">Filled</div>
<svg style="position:absolute;left:1207px;top:353px" width="12" height="7"><path d="M1.500 1h8l-4 4.500z" fill="#000"/></svg>
<div class="ss" style="left:787px;top:379.8px;color:#000;">Transparency</div>
<div class="btn" style="left:885px;top:376px;width:14px;height:21px;border-radius:3px"></div><svg style="position:absolute;left:885px;top:376px" width="14" height="21"><path d="M9.800 5.200 L5 9.700 L9.800 14.200" fill="none" stroke="#111" stroke-width="1.100"/></svg>
<div class="tick" style="left:911px;top:373px"></div><div class="tick" style="left:911px;top:396px"></div>
<div class="tick" style="left:939px;top:373px"></div><div class="tick" style="left:939px;top:396px"></div>
<div class="tick" style="left:968px;top:373px"></div><div class="tick" style="left:968px;top:396px"></div>
<div class="tick" style="left:996px;top:373px"></div><div class="tick" style="left:996px;top:396px"></div>
<div class="tick" style="left:1024px;top:373px"></div><div class="tick" style="left:1024px;top:396px"></div>
<div class="tick" style="left:1053px;top:373px"></div><div class="tick" style="left:1053px;top:396px"></div>
<div class="tick" style="left:1081px;top:373px"></div><div class="tick" style="left:1081px;top:396px"></div>
<div class="tick" style="left:1109px;top:373px"></div><div class="tick" style="left:1109px;top:396px"></div>
<div class="tick" style="left:1137px;top:373px"></div><div class="tick" style="left:1137px;top:396px"></div>
<div class="tick" style="left:1166px;top:373px"></div><div class="tick" style="left:1166px;top:396px"></div>
<div class="tick" style="left:1194px;top:373px"></div><div class="tick" style="left:1194px;top:396px"></div>
<div class="groove" style="left:906px;top:384px;width:294px"></div>
<div class="handle" style="left:1189px;top:378px"></div>
<div class="btn" style="left:1207px;top:376px;width:14px;height:21px;border-radius:3px"></div><svg style="position:absolute;left:1207px;top:376px" width="14" height="21"><path d="M4.600 5.200 L9.600 9.700 L4.600 14.200" fill="none" stroke="#111" stroke-width="1.100"/></svg>
<div style="position:absolute;left:776px;top:438px;width:456px;height:238px;background:#fff;border:1px solid #898c95"></div>
<div style="position:absolute;left:778px;top:421px;width:45px;height:17px;border:1px solid #898c95;border-bottom:none;background:linear-gradient(#f2f2f2 0,#ebebeb 48%,#dddddd 52%,#cfcfcf 100%);box-shadow:inset 1px 1px 0 rgba(255,255,255,.8)"></div>
<div style="position:absolute;left:822px;top:419px;width:68px;height:21px;border:1px solid #898c95;border-bottom:none;background:#fff"></div>
<div class="ss" style="left:788px;top:423.8px;color:#000;">Atom</div>
<div class="ss" style="left:835px;top:422.3px;color:#000;">Lattice</div>
<div class="gb" style="left:789px;top:457px;width:212px;height:204px"></div>
<div style="position:absolute;left:797px;top:452px;width:84px;height:10px;background:#fff"></div>
<div class="ss" style="left:798.5px;top:450.8px;color:#000;">Display style</div>
<div class="ss" style="left:813px;top:473.8px;color:#000;">Range</div>
<div class="ss" style="left:885px;top:473.8px;color:#000;">Min</div>
<div class="ss" style="left:949px;top:473.8px;color:#000;">Max</div>
<div class="ss" style="left:800px;top:495.8px;color:#000;">A:</div>
<div class="spin" style="left:865px;top:492px;width:60px;height:20px"></div>
<div style="position:absolute;left:867px;top:494px;width:14px;height:8px;border:1px solid #b4b4b4;background:linear-gradient(#f8f8f8,#e6e6e6)"></div><div style="position:absolute;left:867px;top:502px;width:14px;height:8px;border:1px solid #b4b4b4;background:linear-gradient(#f4f4f4,#e0e0e0)"></div><svg style="position:absolute;left:867px;top:494px" width="14" height="16"><path d="M4.300 5.7 h5.400 l-2.700-3z M4.300 10.3 h5.400 l-2.700 3z" fill="#4a62bd"/></svg>
<div class="ss" style="left:884.5px;top:495.8px;color:#000;"><span class="z">0</span></div>
<div class="spin" style="left:931px;top:492px;width:59px;height:20px"></div>
<div style="position:absolute;left:974px;top:494px;width:14px;height:8px;border:1px solid #b4b4b4;background:linear-gradient(#f8f8f8,#e6e6e6)"></div><div style="position:absolute;left:974px;top:502px;width:14px;height:8px;border:1px solid #b4b4b4;background:linear-gradient(#f4f4f4,#e0e0e0)"></div><svg style="position:absolute;left:974px;top:494px" width="14" height="16"><path d="M4.300 5.7 h5.400 l-2.700-3z M4.300 10.3 h5.400 l-2.700 3z" fill="#4a62bd"/></svg>
<div class="ss" style="left:935px;top:495.8px;color:#000;">1</div>
<div class="ss" style="left:799px;top:521.8px;color:#000;">B:</div>
<div class="spin" style="left:865px;top:518px;width:60px;height:20px"></div>
<div style="position:absolute;left:867px;top:520px;width:14px;height:8px;border:1px solid #b4b4b4;background:linear-gradient(#f8f8f8,#e6e6e6)"></div><div style="position:absolute;left:867px;top:528px;width:14px;height:8px;border:1px solid #b4b4b4;background:linear-gradient(#f4f4f4,#e0e0e0)"></div><svg style="position:absolute;left:867px;top:520px" width="14" height="16"><path d="M4.300 5.7 h5.400 l-2.700-3z M4.300 10.3 h5.400 l-2.700 3z" fill="#4a62bd"/></svg>
<div class="ss" style="left:884.5px;top:521.8px;color:#000;"><span class="z">0</span></div>
<div class="spin" style="left:931px;top:518px;width:59px;height:20px"></div>
<div style="position:absolute;left:974px;top:520px;width:14px;height:8px;border:1px solid #b4b4b4;background:linear-gradient(#f8f8f8,#e6e6e6)"></div><div style="position:absolute;left:974px;top:528px;width:14px;height:8px;border:1px solid #b4b4b4;background:linear-gradient(#f4f4f4,#e0e0e0)"></div><svg style="position:absolute;left:974px;top:520px" width="14" height="16"><path d="M4.300 5.7 h5.400 l-2.700-3z M4.300 10.3 h5.400 l-2.700 3z" fill="#4a62bd"/></svg>
<div class="ss" style="left:935px;top:521.8px;color:#000;">1</div>
<div class="ss" style="left:799px;top:547.8px;color:#000;">C:</div>
<div class="spin" style="left:865px;top:544px;width:60px;height:20px"></div>
<div style="position:absolute;left:867px;top:546px;width:14px;height:8px;border:1px solid #b4b4b4;background:linear-gradient(#f8f8f8,#e6e6e6)"></div><div style="position:absolute;left:867px;top:554px;width:14px;height:8px;border:1px solid #b4b4b4;background:linear-gradient(#f4f4f4,#e0e0e0)"></div><svg style="position:absolute;left:867px;top:546px" width="14" height="16"><path d="M4.300 5.7 h5.400 l-2.700-3z M4.300 10.3 h5.400 l-2.700 3z" fill="#4a62bd"/></svg>
<div class="ss" style="left:884.5px;top:547.8px;color:#000;"><span class="z">0</span></div>
<div class="spin" style="left:931px;top:544px;width:59px;height:20px"></div>
<div style="position:absolute;left:974px;top:546px;width:14px;height:8px;border:1px solid #b4b4b4;background:linear-gradient(#f8f8f8,#e6e6e6)"></div><div style="position:absolute;left:974px;top:554px;width:14px;height:8px;border:1px solid #b4b4b4;background:linear-gradient(#f4f4f4,#e0e0e0)"></div><svg style="position:absolute;left:974px;top:546px" width="14" height="16"><path d="M4.300 5.7 h5.400 l-2.700-3z M4.300 10.3 h5.400 l-2.700 3z" fill="#4a62bd"/></svg>
<div class="ss" style="left:935px;top:547.8px;color:#000;">1</div>
<div class="gb" style="left:1007px;top:457px;width:212px;height:204px"></div>
<div style="position:absolute;left:1015px;top:452px;width:48px;height:10px;background:#fff"></div>
<div class="ss" style="left:1016.5px;top:450.8px;color:#000;">Lattice</div>
<div class="radio" style="left:1019px;top:477px"></div>
<div class="ss" style="left:1037px;top:476.8px;color:#000;">None</div>
<div class="radio" style="left:1019px;top:499px"></div>
<div class="ss" style="left:1037px;top:498.8px;color:#000;">Dashed line</div>
<div class="radio" style="left:1019px;top:521px"></div>
<div class="ss" style="left:1037px;top:520.8px;color:#000;">Line</div>
<div style="position:absolute;left:1022px;top:524px;width:6px;height:6px;border-radius:50%;background:radial-gradient(circle at 50% 62%,#7fe0ff 0,#2a9fe0 35%,#14508f 70%,#0e2c58 100%);box-shadow:0 0 0 .5px #1a3f6f"></div>
<div class="ss" style="left:1047px;top:545.8px;color:#000;">Line width</div>
<div class="spin" style="left:1114px;top:541px;width:93px;height:21px"></div>
<div style="position:absolute;left:1191px;top:543px;width:14px;height:8px;border:1px solid #b4b4b4;background:linear-gradient(#f8f8f8,#e6e6e6)"></div><div style="position:absolute;left:1191px;top:551px;width:14px;height:9px;border:1px solid #b4b4b4;background:linear-gradient(#f4f4f4,#e0e0e0)"></div><svg style="position:absolute;left:1191px;top:543px" width="14" height="17"><path d="M4.300 5.7 h5.400 l-2.700-3z M4.300 10.3 h5.400 l-2.700 3z" fill="#4a62bd"/></svg>
<div class="ss" style="left:1118.5px;top:545.8px;color:#000;">1.<span class="z">0</span></div>
<div class="btn" style="left:777px;top:684px;width:456px;height:21px"></div>
<div class="ss" style="left:977.5px;top:687.8px;color:#000;font-weight:bold">Edit data</div>
<svg style="position:absolute;left:1244px;top:738px" width="12" height="12"><g fill="#fff"><rect x="9" y="2" width="1.500" height="1.500"/><rect x="6" y="5" width="1.500" height="1.500"/><rect x="9" y="5" width="1.500" height="1.500"/><rect x="3" y="8" width="1.500" height="1.500"/><rect x="6" y="8" width="1.500" height="1.500"/><rect x="9" y="8" width="1.500" height="1.500"/></g><g fill="#bdbdbd"><rect x="8" y="1" width="1.500" height="1.500"/><rect x="5" y="4" width="1.500" height="1.500"/><rect x="8" y="4" width="1.500" height="1.500"/><rect x="2" y="7" width="1.500" height="1.500"/><rect x="5" y="7" width="1.500" height="1.500"/><rect x="8" y="7" width="1.500" height="1.500"/></g></svg>
<div style="position:absolute;left:0;top:0;width:1264px;height:758px;border-radius:8px 8px 7px 7px;box-shadow:inset 0 0 0 1px #1f2b3a;pointer-events:none"></div></div></body></html>
